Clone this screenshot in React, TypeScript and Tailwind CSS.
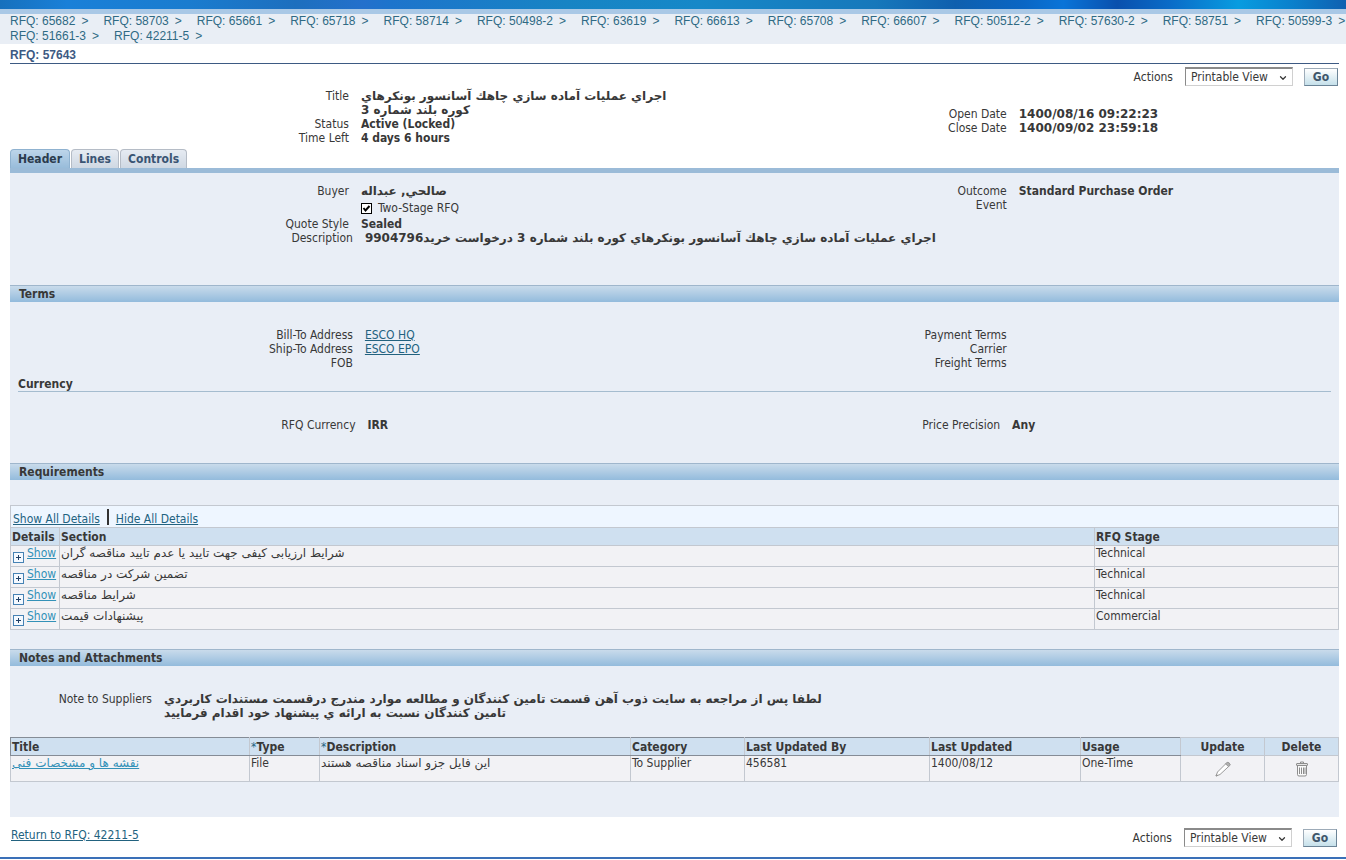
import React, { useId, type ReactNode } from 'react';
import { ChevronDown } from 'lucide-react';

const crumbs = [
  '65682', '58703', '65661', '65718', '58714', '50498-2', '63619', '66613',
  '65708', '66607', '50512-2', '57630-2', '58751', '50599-3', '51661-3', '42211-5',
];

const sections = [
  ['شرایط ارزیابی کیفی جهت تایید یا عدم تایید مناقصه گران', 'Technical'],
  ['تضمین شرکت در مناقصه', 'Technical'],
  ['شرایط مناقصه', 'Technical'],
  ['پیشنهادات قیمت', 'Commercial'],
];

function Actions() {
  const id = useId();
  return (
    <div className="flex items-center">
      <label htmlFor={id} className="mr-3">Actions</label>
      <div className="relative mr-[11px]">
        <select
          id={id}
          className="block h-[19px] w-27 appearance-none border border-t-2 border-[#d0d0d0] border-t-[#8a8a8a] border-l-[#8a8a8a] bg-white pl-[5px] leading-4 outline-none"
        >
          <option>Printable View</option>
        </select>
        <ChevronDown className="pointer-events-none absolute top-1.5 right-[5px] size-2.5" strokeWidth={3} />
      </div>
      <button className="h-[18px] w-[34px] border border-[#9dabb8] border-r-[#6b8497] border-b-[#6b8497] bg-linear-to-b from-white to-[#c5e0ea] leading-4 font-bold text-[#3f566b]">
        Go
      </button>
    </div>
  );
}

function Field({ label, width, children }: { label: string; width: string; children?: ReactNode }) {
  return (
    <div className="flex">
      <div className={`shrink-0 text-right ${width}`}>{label}</div>
      <div className="ml-3 font-bold whitespace-nowrap">{children}</div>
    </div>
  );
}

function Wide({ children }: { children: ReactNode }) {
  return <span className="font-['DejaVu_Sans',sans-serif]">{children}</span>;
}

function Bar({ children }: { children: ReactNode }) {
  return (
    <h2 className="h-[17px] border-t border-[#9fb6cc] bg-linear-to-b from-[#c9dbeb] to-[#93bbdc] pl-[9px] leading-[17px] font-bold">
      {children}
    </h2>
  );
}

function PlusBox() {
  return (
    <svg className="mt-1.5 ml-px size-[11px] shrink-0" viewBox="0 0 11 11" shapeRendering="crispEdges">
      <rect x="0.5" y="0.5" width="10" height="10" fill="#f4f9ff" stroke="#4682b4" />
      <path d="M3 5.5h5M5.5 3v5" stroke="#1f3f66" />
    </svg>
  );
}

function Pencil() {
  return (
    <svg className="size-4" viewBox="0 0 16 16" fill="#fff" stroke="#9a9a9a">
      <path d="M1 15l1.5-4L11.500 2q1.300-1.300 2.700 0t.3 2.700L5 13.500z" />
      <path d="M11.500 2q1.300-1.300 2.700 0t.3 2.700l-1 1-3-3z" fill="#b0b0b0" />
      <path d="M1 15l.6-1.500 1 1z" fill="#555" />
    </svg>
  );
}

function Trash() {
  return (
    <svg className="size-4" viewBox="0 0 16 16" fill="none" stroke="#8d8d8d">
      <path d="M3.500 4.500v9q0 1.500 1.500 1.500h6q1.500 0 1.500-1.500v-9z" fill="#fafafa" />
      <rect x="2.500" y="2.500" width="11" height="2" rx="0.500" fill="#e4e4e4" />
      <path d="M6.500 2.500V1h3v1.500M5.500 6.500v6.500M7.500 6.500v6.500M9.500 6.500v6.500M11 6.500v6.500" />
    </svg>
  );
}

const link = 'text-[#22627f] underline';
const brightLink = 'text-[#3391b8] underline';
const cell = 'border border-[#c3c8d0] px-px py-0 align-top font-normal';
const sortable = 'border border-[#c3c8d0] border-t-[#858c96] border-l-[#858c96] border-b-[#858c96] px-px text-left font-bold';
const idleTab = 'h-[19px] rounded-t border border-b-0 border-[#b5bcc6] bg-linear-to-b from-[#e6ebf2] to-[#cfd8e3] px-[7px]';

export default function App() {
  return (
    <div className="min-h-screen bg-white font-['DejaVu_Sans_Condensed','DejaVu_Sans',sans-serif] text-[12px] leading-[14px] text-[#383838]">
      <div className="h-[9px] bg-[linear-gradient(90deg,#1670bd_0%,#1a80d8_5%,#1a7ccf_14%,#1d6fbe_22%,#2470cc_27%,#1d74cc_29%,#1784c4_42%,#1688c8_52%,#1678bb_65%,#0f5fae_71%,#0a66c4_76%,#0a74d8_79%,#0a50ad_83%,#0a6cc8_87%,#089ce0_92%,#0a80cc_96%,#1060b0_100%)]" />
      <div className="h-[5px] bg-[#a9c8e6]" />
      <nav className="flex h-[30px] flex-wrap content-start gap-x-[15px] overflow-hidden bg-[#e9eef5] pl-2.5 font-['Liberation_Sans',Arial,sans-serif] leading-[15px] text-[#2f6a84]">
        {crumbs.map((c) => (
          <span key={c}>
            <a href="#">RFQ: {c}</a>
            <span className="ml-1.5">&gt;</span>
          </span>
        ))}
      </nav>

      <div className="mr-[7px] ml-2.5">
        <h1 className="h-5 border-b border-[#3d5a83] pt-1 font-['Liberation_Sans',Arial,sans-serif] text-[12px] leading-[14px] font-bold text-[#3d5a83]">
          RFQ: 57643
        </h1>
        <div className="mt-[3px] flex justify-end pr-px"><Actions /></div>

        <div className="mt-[3px] grid grid-cols-2 items-center">
          <div>
            <Field label="Title" width="w-[51%]">
              <Wide>اجراي عمليات آماده سازي چاهك آسانسور بونكرهاي<br />كوره بلند شماره 3</Wide>
            </Field>
            <Field label="Status" width="w-[51%]">Active (Locked)</Field>
            <Field label="Time Left" width="w-[51%]">4 days 6 hours</Field>
          </div>
          <div className="pt-2">
            <Field label="Open Date" width="w-1/2"><Wide>1400/08/16 09:22:23</Wide></Field>
            <Field label="Close Date" width="w-1/2"><Wide>1400/09/02 23:59:18</Wide></Field>
          </div>
        </div>

        <div className="mt-1 flex gap-px border-b-[5px] border-[#9bbbd8] font-bold text-[#3a5473]">
          <button className="h-[19px] rounded-t border border-b-0 border-[#8fb2d0] bg-linear-to-b from-[#bdd5ea] to-[#98bcda] px-[7px] text-[#2b3b4d]">Header</button>
          <button className={idleTab}>Lines</button>
          <button className={idleTab}>Controls</button>
        </div>

        <main className="bg-[#e9eef6] pb-[35px]">
          <div className="grid h-28 grid-cols-2 pt-[11px]">
            <div>
              <Field label="Buyer" width="w-[51%]"><Wide>صالحي, عبداله</Wide></Field>
              <Field label="" width="w-[51%]">
                <label className="flex h-[19px] items-center gap-1.5 pt-px font-normal">
                  <span className="relative size-[11px]">
                    <input type="checkbox" defaultChecked className="block size-[11px] appearance-none border border-black bg-white" />
                    <svg className="pointer-events-none absolute top-0 left-0 size-[11px]" viewBox="0 0 11 11" fill="none" stroke="#000" strokeWidth="2">
                      <path d="M2.500 5l2 2.500L8.500 3" />
                    </svg>
                  </span>
                  Two-Stage RFQ
                </label>
              </Field>
              <Field label="Quote Style" width="w-[51%]">Sealed</Field>
              <Field label="Description" width="w-[51.600%]">
                <Wide>اجراي عمليات آماده سازي چاهك آسانسور بونكرهاي كوره بلند شماره 3 درخواست خريد9904796</Wide>
              </Field>
            </div>
            <div>
              <Field label="Outcome" width="w-1/2">Standard Purchase Order</Field>
              <Field label="Event" width="w-1/2" />
            </div>
          </div>

          <Bar>Terms</Bar>
          <div className="grid grid-cols-2 pt-[26px]">
            <div>
              <Field label="Bill-To Address" width="w-[51.600%]"><a href="#" className={`${link} font-normal`}>ESCO HQ</a></Field>
              <Field label="Ship-To Address" width="w-[51.600%]"><a href="#" className={`${link} font-normal`}>ESCO EPO</a></Field>
              <Field label="FOB" width="w-[51.600%]" />
            </div>
            <div>
              <Field label="Payment Terms" width="w-1/2" />
              <Field label="Carrier" width="w-1/2" />
              <Field label="Freight Terms" width="w-1/2" />
            </div>
          </div>
          <h3 className="mx-2 mt-[7px] border-b border-[#a5bccf] font-bold">Currency</h3>
          <div className="grid h-[71px] grid-cols-2 pt-[26px]">
            <Field label="RFQ Currency" width="w-[52%]">IRR</Field>
            <Field label="Price Precision" width="w-[49%]">Any</Field>
          </div>

          <Bar>Requirements</Bar>
          <div className="mt-[25px] flex h-[22px] items-center gap-[7px] border border-b-0 border-[#c3c8d0] bg-[#eef6ff] pt-1 pl-0.5">
            <a href="#" className={link}>Show All Details</a>
            <span className="mb-1 h-4 w-0.5 bg-[#333]" />
            <a href="#" className={link}>Hide All Details</a>
          </div>
          <table className="w-full table-fixed border-collapse">
            <colgroup>
              <col className="w-[49px]" />
              <col />
              <col className="w-[244px]" />
            </colgroup>
            <thead className="bg-[#cfe0f0]">
              <tr className="h-[18px] text-left">
                <th className="border border-[#c3c8d0] px-px">Details</th>
                <th className="border border-[#c3c8d0] px-px">Section</th>
                <th className="border border-[#c3c8d0] px-px">RFQ Stage</th>
              </tr>
            </thead>
            <tbody className="bg-[#f2f2f5]">
              {sections.map(([name, stage]) => (
                <tr key={name} className="h-[21px]">
                  <td className={cell}>
                    <div className="flex gap-[3px]"><PlusBox /><a href="#" className={brightLink}>Show</a></div>
                  </td>
                  <td className={cell}><Wide>{name}</Wide></td>
                  <td className={cell}>{stage}</td>
                </tr>
              ))}
            </tbody>
          </table>

          <div className="mt-[19px]"><Bar>Notes and Attachments</Bar></div>
          <div className="pt-[26px] pb-[17px]">
            <Field label="Note to Suppliers" width="w-[142px]">
              <Wide>
                لطفا پس از مراجعه به سايت ذوب آهن قسمت تامين كنندگان و مطالعه موارد مندرج درقسمت مستندات كاربردي<br />
                تامين كنندگان نسبت به ارائه ي پيشنهاد خود اقدام فرماييد
              </Wide>
            </Field>
          </div>
          <table className="w-full table-fixed border-collapse">
            <colgroup>
              <col className="w-[18%]" />
              <col className="w-[70px]" />
              <col />
              <col className="w-[114px]" />
              <col className="w-[185px]" />
              <col className="w-[151px]" />
              <col className="w-[100px]" />
              <col className="w-[84px]" />
              <col className="w-[74px]" />
            </colgroup>
            <thead className="bg-[#cfe0f0]">
              <tr className="h-[18px]">
                <th className={sortable}>Title</th>
                <th className={sortable}><span className="font-normal text-[#22627f]">*</span>Type</th>
                <th className={sortable}><span className="font-normal text-[#22627f]">*</span>Description</th>
                <th className={sortable}>Category</th>
                <th className={sortable}>Last Updated By</th>
                <th className={sortable}>Last Updated</th>
                <th className={sortable}>Usage</th>
                <th className="border border-[#c3c8d0]">Update</th>
                <th className="border border-[#c3c8d0]">Delete</th>
              </tr>
            </thead>
            <tbody className="bg-[#f2f2f5]">
              <tr className="h-[26px]">
                <td className={cell}><a href="#" className={brightLink}><Wide>نقشه ها و مشخصات فنی</Wide></a></td>
                <td className={cell}>File</td>
                <td className={cell}><Wide>این فایل جزو اسناد مناقصه هستند</Wide></td>
                <td className={cell}>To Supplier</td>
                <td className={cell}>456581</td>
                <td className={cell}>1400/08/12</td>
                <td className={cell}>One-Time</td>
                <td className="border border-[#c3c8d0]"><button aria-label="Update" className="mx-auto block"><Pencil /></button></td>
                <td className="border border-[#c3c8d0]"><button aria-label="Delete" className="mx-auto block"><Trash /></button></td>
              </tr>
            </tbody>
          </table>
        </main>

        <footer className="flex items-start justify-between pt-[11px] pr-0.5 pb-2.5 pl-px">
          <a href="#" className={link}>Return to RFQ: 42211-5</a>
          <Actions />
        </footer>
      </div>
      <div className="h-0.5 bg-[#3a70b8]" />
    </div>
  );
}
